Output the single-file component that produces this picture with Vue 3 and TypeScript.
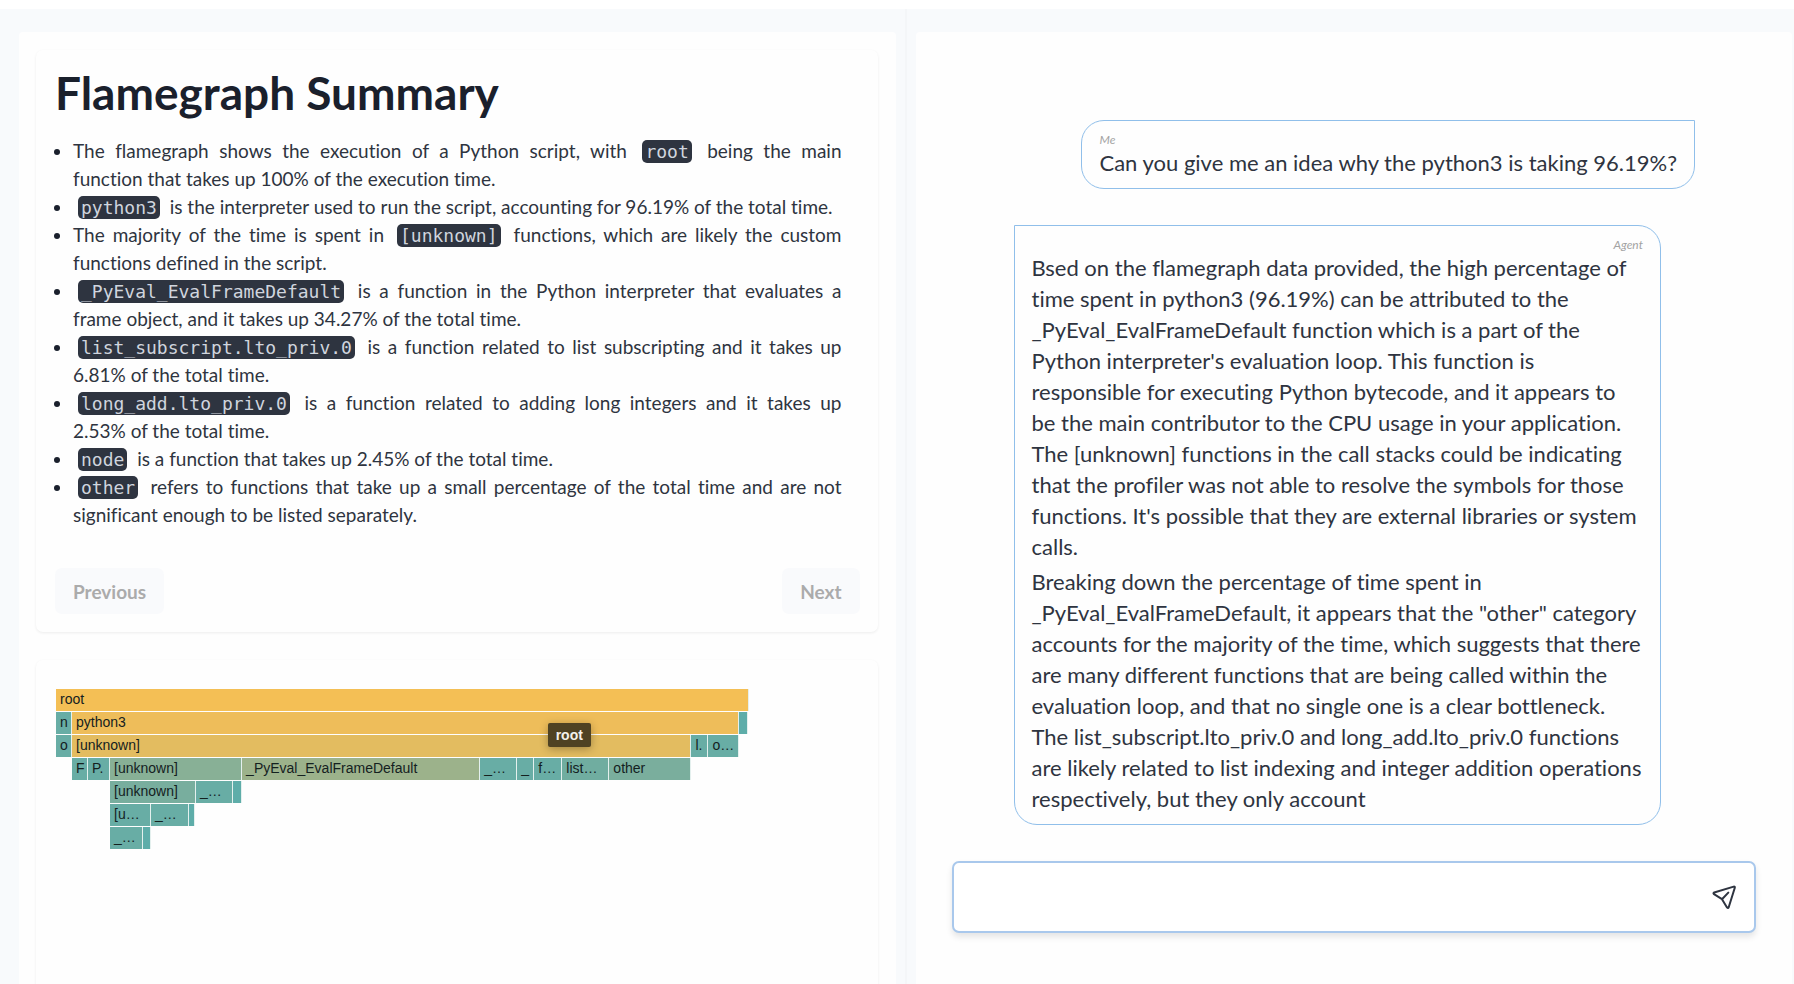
<script setup lang="ts">
import { ref } from 'vue'

interface Part {
  text: string
  code?: boolean
}

interface Cell {
  label: string
  width: number
  color: string
}

interface Row {
  offset: number
  cells: Cell[]
}

const message = ref('')

const t = (text: string): Part => ({ text })
const c = (text: string): Part => ({ text, code: true })

const summary: Part[][] = [
  [t('The flamegraph shows the execution of a Python script, with '), c('root'), t(' being the main function that takes up 100% of the execution time.')],
  [c('python3'), t(' is the interpreter used to run the script, accounting for 96.19% of the total time.')],
  [t('The majority of the time is spent in '), c('[unknown]'), t(' functions, which are likely the custom functions defined in the script.')],
  [c('_PyEval_EvalFrameDefault'), t(' is a function in the Python interpreter that evaluates a frame object, and it takes up 34.27% of the total time.')],
  [c('list_subscript.lto_priv.0'), t(' is a function related to list subscripting and it takes up 6.81% of the total time.')],
  [c('long_add.lto_priv.0'), t(' is a function related to adding long integers and it takes up 2.53% of the total time.')],
  [c('node'), t(' is a function that takes up 2.45% of the total time.')],
  [c('other'), t(' refers to functions that take up a small percentage of the total time and are not significant enough to be listed separately.')],
]

const answer: string[] = [
  `Bsed on the flamegraph data provided, the high percentage of
time spent in python3 (96.19%) can be attributed to the
_PyEval_EvalFrameDefault function which is a part of the
Python interpreter's evaluation loop. This function is
responsible for executing Python bytecode, and it appears to
be the main contributor to the CPU usage in your application.
The [unknown] functions in the call stacks could be indicating
that the profiler was not able to resolve the symbols for those
functions. It's possible that they are external libraries or system
calls.`,
  `Breaking down the percentage of time spent in
_PyEval_EvalFrameDefault, it appears that the "other" category
accounts for the majority of the time, which suggests that there
are many different functions that are being called within the
evaluation loop, and that no single one is a clear bottleneck.
The list_subscript.lto_priv.0 and long_add.lto_priv.0 functions
are likely related to list indexing and integer addition operations
respectively, but they only account`,
]

const TOTAL = 692
const cell = (label: string, width: number, color = '#68ada5'): Cell => ({ label, width, color })

const rows: Row[] = [
  { offset: 0, cells: [cell('root', 692, '#f4bf55')] },
  { offset: 0, cells: [cell('n', 16), cell('python3', 667, '#eebd5a'), cell('', 9, '#5eada9')] },
  { offset: 0, cells: [cell('o', 16), cell('[unknown]', 619, '#e3bc60'), cell('l.', 17), cell('o…', 31)] },
  {
    offset: 16,
    cells: [
      cell('F', 16), cell('P.', 22), cell('[unknown]', 132, '#88b096'),
      cell('_PyEval_EvalFrameDefault', 238, '#9cb28b'),
      cell('_…', 37), cell('_', 17), cell('f…', 28),
      cell('list…', 47, '#70ada0'), cell('other', 82, '#7aae9d'),
    ],
  },
  { offset: 54, cells: [cell('[unknown]', 86, '#78ae9e'), cell('_…', 37), cell('', 9, '#5eada9')] },
  { offset: 54, cells: [cell('[u…', 41), cell('_…', 38), cell('', 6, '#5eada9')] },
  { offset: 54, cells: [cell('_…', 33), cell('', 8, '#5eada9')] },
]

const pct = (n: number): string => `${(n / TOTAL) * 100}%`
</script>

<template>
  <div class="page">
    <main class="workspace">
      <section class="panel left">
        <article class="card summary">
          <h1>Flamegraph Summary</h1>
          <ul>
            <li v-for="(item, i) in summary" :key="i"><template v-for="(part, j) in item" :key="j"><code v-if="part.code">{{ part.text }}</code><span v-else>{{ part.text }}</span></template></li>
          </ul>
          <nav class="pager">
            <button type="button" disabled>Previous</button>
            <button type="button" disabled>Next</button>
          </nav>
        </article>
        <div class="card graph-card">
          <div class="graph">
            <div v-for="(row, i) in rows" :key="i" class="row">
              <div class="spacer" :style="{ width: pct(row.offset) }"></div>
              <div
                v-for="(item, j) in row.cells"
                :key="j"
                class="cell"
                :style="{ width: pct(item.width), backgroundColor: item.color }"
              ><span v-if="item.label">{{ item.label }}</span></div>
            </div>
            <div class="tooltip" role="tooltip">root</div>
          </div>
        </div>
      </section>

      <div class="divider"></div>

      <section class="panel chat">
        <div class="messages">
          <div class="bubble me">
            <span class="author">Me</span>
            <p>Can you give me an idea why the python3 is taking 96.19%?</p>
          </div>
          <div class="bubble agent">
            <span class="author">Agent</span>
            <p v-for="(text, i) in answer" :key="i">{{ text }}</p>
          </div>
        </div>
        <form class="composer" @submit.prevent>
          <input v-model="message" type="text" aria-label="Message" />
          <button type="submit" aria-label="Send">
            <svg viewBox="0 0 24 24" width="24" height="24" fill="none" stroke="currentColor" stroke-width="2" stroke-linejoin="round" stroke-linecap="round">
              <path d="M21.7 1.6 2.2 7.5Q.8 8.2 2 9.2L10 14.2 15 22.4Q16 23.6 16.7 22.2L22.8 2.7Q23 1.3 21.7 1.6ZM10 14.2 16.3 7.6" />
            </svg>
          </button>
        </form>
      </section>
    </main>
  </div>
</template>

<style>
body {
  margin: 0;
  background: #ffffff;
}
</style>

<style scoped>
* {
  box-sizing: border-box;
}

.page {
  height: 100vh;
  padding-top: 9px;
  overflow: hidden;
  font-family: Lato, "Open Sans", sans-serif;
  font-variant-ligatures: no-common-ligatures;
  color: #2e3440;
}

.workspace {
  display: grid;
  grid-template-columns: minmax(0, 1fr) 2px minmax(0, 1fr);
  column-gap: 9px;
  height: 100%;
  padding: 23px 2px 0 19px;
  background: #f8fafc;
}

.panel {
  background: #fefefe;
  border-radius: 4px 4px 0 0;
}

.divider {
  margin-top: -23px;
  background: #f4f6f8;
}

.left {
  display: flex;
  flex-direction: column;
  gap: 28px;
  padding: 18px 18px 0 17px;
}

.card {
  border-radius: 7px;
  background: #fefefe;
  box-shadow: 0 1px 3px rgba(0, 0, 0, 0.07);
}

.summary {
  padding: 18px 18px 18px 19px;
}

h1 {
  margin: 0;
  font-size: 46px;
  line-height: 50px;
  font-weight: 700;
  color: #1a202c;
}

ul {
  margin: 19px 18px 0;
  padding: 0;
  font-size: 19px;
  line-height: 28px;
  text-align: justify;
}

li::marker {
  color: #1a202c;
}

code {
  margin: 0 5px;
  padding: 1px 3px;
  border-radius: 5px;
  background: #2e3440;
  color: #d0d5de;
  font-family: "DejaVu Sans Mono", monospace;
  font-size: 18px;
  line-height: 20px;
}

.pager {
  display: flex;
  justify-content: space-between;
  margin-top: 39px;
}

.pager button {
  height: 46px;
  padding: 0 18px;
  border: 0;
  border-radius: 7px;
  background: #f9fafc;
  color: #ababab;
  font-family: inherit;
  font-size: 19px;
  font-weight: 700;
}

.graph-card {
  flex: 1;
  margin-bottom: -20px;
  padding: 29px 129px 0 20px;
}

.graph {
  position: relative;
}

.row {
  display: flex;
  height: 23px;
}

.spacer,
.cell {
  flex: none;
  height: 22px;
}

.cell {
  overflow: hidden;
  border-right: 1px solid #e4f0ee;
  color: #14211f;
  font-family: "Liberation Sans", Arial, sans-serif;
  font-size: 14px;
  line-height: 20px;
  white-space: nowrap;
}

.cell span {
  padding-left: 4px;
}

.tooltip {
  position: absolute;
  top: 34px;
  left: 71%;
  padding: 0 8px;
  border-radius: 2px;
  background: #4f4223;
  box-shadow: 0 2px 8px rgba(0, 0, 0, 0.3);
  color: #f4f1ea;
  font-family: "Liberation Sans", Arial, sans-serif;
  font-size: 14px;
  font-weight: 700;
  line-height: 24px;
}

.chat {
  padding: 88px 36px 0;
}

.messages {
  display: flex;
  flex-direction: column;
  gap: 36px;
  padding: 0 61px 0 62px;
}

.bubble {
  display: flex;
  flex-direction: column;
  padding: 12px 17px 10px;
  border: 1px solid #90bfea;
  border-radius: 23px;
  font-size: 22px;
  line-height: 31px;
}

.bubble p {
  margin: 0;
  white-space: pre-line;
}

.bubble p + p {
  margin-top: 4px;
}

.me {
  align-self: flex-end;
  border-top-right-radius: 0;
}

.agent {
  align-self: flex-start;
  width: 95%;
  border-top-left-radius: 0;
}

.author {
  color: #a3a3a3;
  font-size: 12px;
  font-style: italic;
  line-height: 14px;
}

.agent .author {
  text-align: right;
}

.composer {
  display: flex;
  align-items: center;
  height: 72px;
  margin-top: 36px;
  padding-right: 18px;
  border: 2px solid #a9c8ec;
  border-radius: 7px;
  background: #ffffff;
  box-shadow: 0 4px 6px rgba(0, 0, 0, 0.1);
}

.composer input {
  flex: 1;
  min-width: 0;
  height: 100%;
  padding: 0 18px;
  border: 0;
  outline: 0;
  background: transparent;
  color: inherit;
  font-family: inherit;
  font-size: 22px;
}

.composer button {
  display: flex;
  padding: 0;
  border: 0;
  background: transparent;
  color: #2e3440;
}
</style>
